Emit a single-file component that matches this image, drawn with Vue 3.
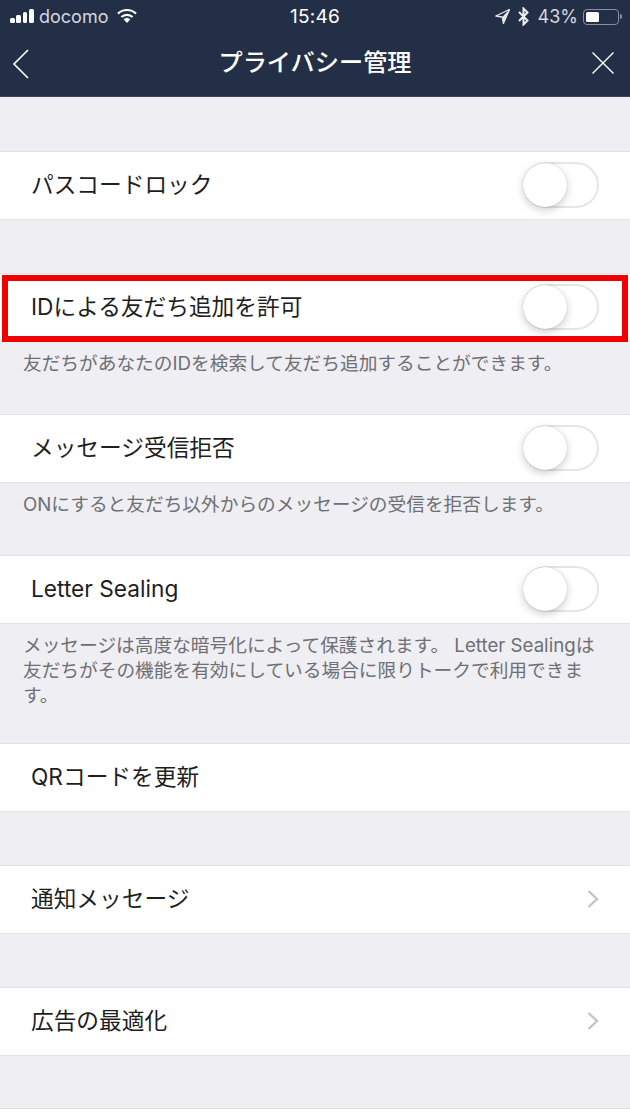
<script setup>
const sections = [
  { label: 'パスコードロック', toggle: true, gap: 'g53' },
  { label: 'IDによる友だち追加を許可', toggle: true, note: '友だちがあなたのIDを検索して友だち追加することができます。', noteClass: 'n1', highlighted: true },
  { label: 'メッセージ受信拒否', toggle: true, note: 'ONにすると友だち以外からのメッセージの受信を拒否します。', noteClass: 'n1' },
  { label: 'Letter Sealing', toggle: true, note: 'メッセージは高度な暗号化によって保護されます。 Letter Sealingは友だちがその機能を有効にしている場合に限りトークで利用できます。', noteClass: 'n3' },
  { label: 'QRコードを更新', gap: 'g53' },
  { label: '通知メッセージ', chevron: true, gap: 'g53' },
  { label: '広告の最適化', chevron: true, gap: 'g52' }
]
</script>

<template>
  <div class="page">
    <header class="top">
      <div class="status">
        <div class="st-left">
          <div class="signal"><i class="s1"></i><i class="s2"></i><i class="s3"></i><i class="s4"></i></div>
          <span class="carrier">docomo</span>
          <svg class="wifi" viewBox="0 0 22 16" width="22" height="16">
            <path d="M11 15 L7.6 11.3 A5 5 0 0 1 14.4 11.3 Z" fill="#fff"/>
            <path d="M5.4 9 A8.2 8.2 0 0 1 16.6 9" fill="none" stroke="#fff" stroke-width="2.2"/>
            <path d="M2 5.6 A13 13 0 0 1 20 5.6" fill="none" stroke="#fff" stroke-width="2.2"/>
          </svg>
        </div>
        <div class="time">15:46</div>
        <div class="st-right">
          <svg class="loc" viewBox="0 0 15 15" width="15" height="15">
            <path d="M14.5 .5 L.8 7 L7.2 8 L8.4 14.5 Z" fill="none" stroke="#e4e6ea" stroke-width="1.3" stroke-linejoin="round"/>
            <path d="M14.5 .5 L7.2 8 L8.4 14.5 Z" fill="#e4e6ea"/>
          </svg>
          <svg class="bt" viewBox="0 0 11 19" width="11" height="19">
            <path d="M1 5 L9.5 13.5 L5.5 17.5 V1.5 L9.5 5.5 L1 14" fill="none" stroke="#eceef1" stroke-width="2"/>
          </svg>
          <span class="pct">43%</span>
          <div class="battery"><div class="charge"></div></div>
          <div class="nub"></div>
        </div>
      </div>
      <nav class="nav">
        <svg class="nav-icon back" viewBox="0 0 18 32" width="18" height="32">
          <path d="M16 2 L2 16 L16 30" fill="none" stroke="#fff" stroke-width="1.6"/>
        </svg>
        <h1 class="title">プライバシー管理</h1>
        <svg class="nav-icon close" viewBox="0 0 24 24" width="24" height="24">
          <path d="M1.5 1.5 L22.5 22.5 M22.5 1.5 L1.5 22.5" fill="none" stroke="#fff" stroke-width="1.4"/>
        </svg>
      </nav>
    </header>

    <main class="list">
      <section v-for="s in sections" :key="s.label" :class="['block', s.gap]">
        <div class="row" :class="{ hl: s.highlighted }">
          <span class="label">{{ s.label }}</span>
          <div v-if="s.toggle" class="toggle"><div class="knob"></div></div>
          <svg v-if="s.chevron" class="chev" viewBox="0 0 14 20" width="14" height="20">
            <path d="M2.5 2 L11 10 L2.5 18" fill="none" stroke="#c4c4c8" stroke-width="2.4"/>
          </svg>
          <div v-if="s.highlighted" class="redbox"></div>
        </div>
        <p v-if="s.note" class="note" :class="s.noteClass">{{ s.note }}</p>
      </section>
      <div class="tail"></div>
    </main>
  </div>
</template>

<style>
html, body { margin: 0; padding: 0; }
</style>

<style scoped>
.page {
  width: 630px;
  height: 1120px;
  overflow: hidden;
  background: #eeeef3;
  font-family: Inter, "Noto Sans CJK JP", sans-serif;
  display: flex;
  flex-direction: column;
}
.top {
  height: 97px;
  flex: none;
  background: #232f46;
  color: #fff;
  box-sizing: border-box;
  border-bottom: 1px solid #3c4659;
}
.status {
  height: 33px;
  display: grid;
  grid-template-columns: 1fr auto 1fr;
  align-items: center;
  color: #d5d8de;
  font-size: 18px;
}
.st-left { display: flex; align-items: center; padding-left: 10px; }
.signal { display: flex; align-items: flex-end; gap: 1.5px; width: 24px; height: 14px; margin-top: -2px; }
.signal i { display: block; width: 4.8px; background: #fff; border-radius: 1.5px; }
.s1 { height: 5px; }
.s2 { height: 8px; }
.s3 { height: 11px; }
.s4 { height: 14px; }
.carrier { margin-left: 5px; }
.wifi { margin-left: 8px; margin-top: -2px; }
.time { color: #fff; font-size: 19px; font-weight: 400; letter-spacing: .2px; }
.st-right { display: flex; align-items: center; justify-content: flex-end; padding-right: 8px; }
.bt { margin-left: 8px; }
.pct { margin-left: 9px; }
.battery {
  margin-left: 5px;
  width: 36px;
  height: 16px;
  box-sizing: border-box;
  border: 1px solid #8a909c;
  border-radius: 4px;
  padding: 2px;
}
.charge { width: 43%; height: 100%; background: #fff; border-radius: 1.5px; }
.nub { width: 2px; height: 5px; margin-left: 1px; background: #8a909c; border-radius: 0 2px 2px 0; }
.nav {
  height: 63px;
  display: grid;
  grid-template-columns: 1fr auto 1fr;
  align-items: center;
  padding: 0 15px 0 12px;
}
.nav-icon { flex: none; }
.back { margin-top: -2px; }
.close { margin-top: -4px; justify-self: end; }
.title {
  margin: -4px 0 0 3px;
  font-size: 24.2px;
  line-height: 32px;
  font-weight: 500;
  color: #fff;
}
.list { padding-top: 54px; flex: 1; display: flex; flex-direction: column; }
.row {
  position: relative;
  height: 69px;
  box-sizing: border-box;
  background: #fff;
  border-top: 1px solid #e2e2e6;
  border-bottom: 1px solid #e2e2e6;
  display: flex;
  align-items: center;
  justify-content: space-between;
  padding: 0 31px;
}
.label { font-size: 22.7px; line-height: 30px; color: #1e1e1e; margin-top: -2px; }
.toggle {
  position: absolute;
  right: 31px;
  top: 10px;
  width: 76px;
  height: 46px;
  box-sizing: border-box;
  border: 2px solid #e6e6e6;
  border-radius: 23px;
  background: #fff;
}
.knob {
  position: absolute;
  left: -2px;
  top: -1px;
  width: 44px;
  height: 44px;
  border-radius: 50%;
  background: #fff;
  box-shadow: 0 3px 8px rgba(0, 0, 0, .2), 0 0 1px rgba(0, 0, 0, .25);
}
.chev { margin-right: -1px; margin-top: -2px; }
.redbox {
  position: absolute;
  left: 2px;
  right: 2px;
  top: 1px;
  bottom: -1px;
  border: 6.5px solid #f00000;
  pointer-events: none;
}
.note {
  margin: 0;
  padding: 9px 31px 0 23px;
  box-sizing: border-box;
  font-size: 18.7px;
  line-height: 25px;
  color: #6f6f74;
}
.n1 { height: 72px; }
.n3 { height: 119px; }
.g53 { margin-bottom: 53px; }
.g52 { margin-bottom: 52px; }
.block:first-child { margin-bottom: 53px; }
.tail { flex: 1; background: #fff; border-top: 1px solid #dcdce0; }
</style>
